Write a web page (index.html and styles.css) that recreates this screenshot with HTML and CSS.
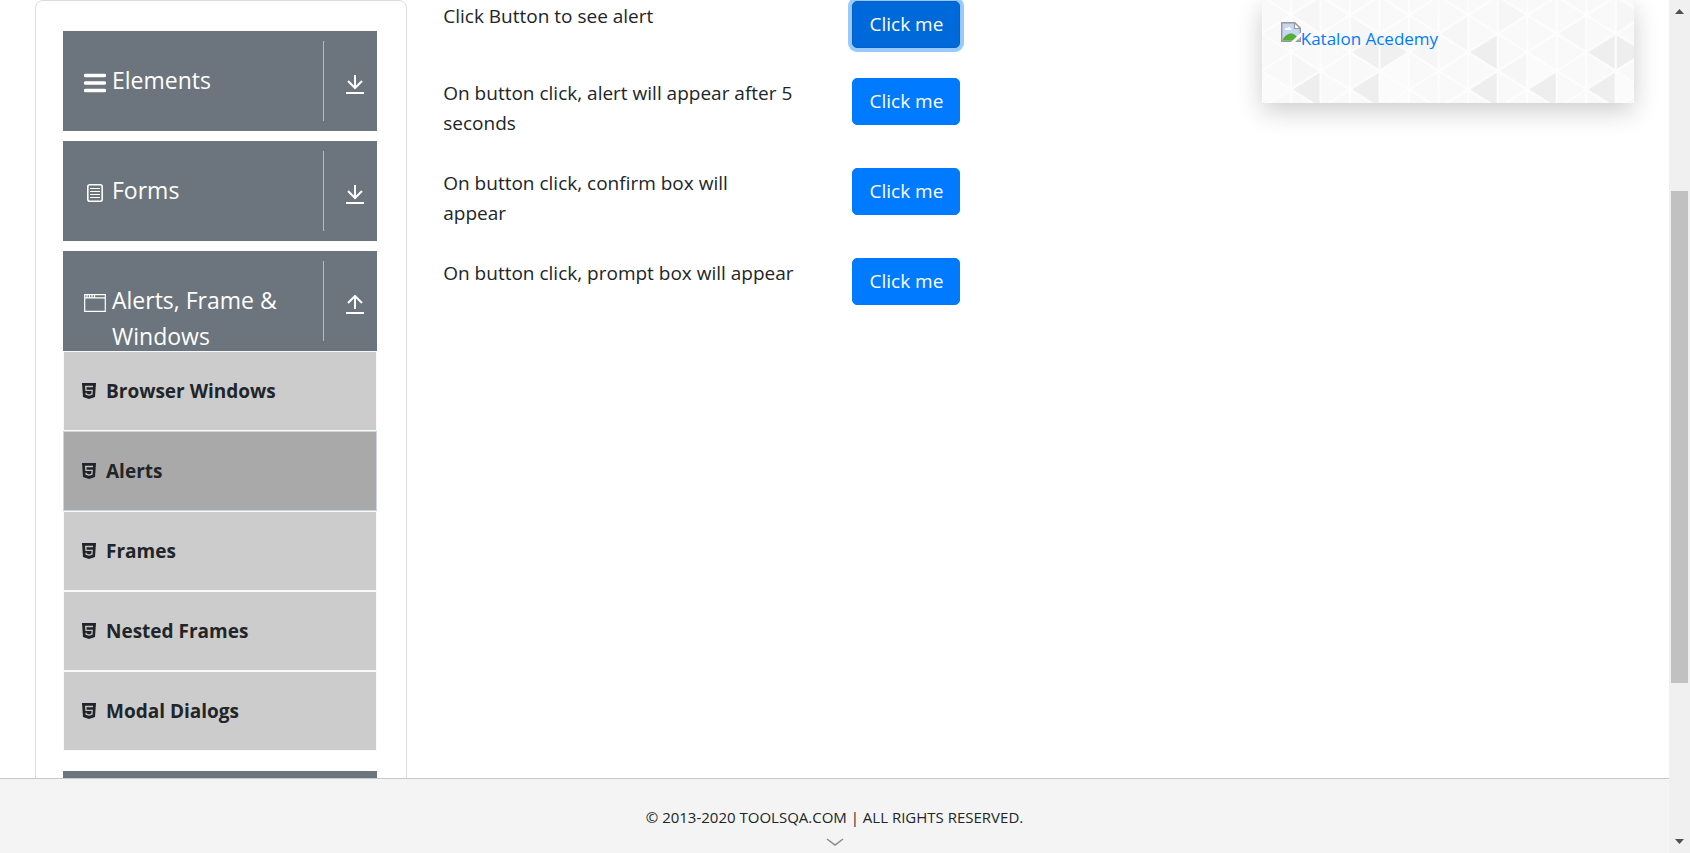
FILE: index.html
```html
<!DOCTYPE html>
<html lang="en">
<head>
<meta charset="utf-8">
<title>ToolsQA - Alerts</title>
<link rel="stylesheet" href="styles.css">
</head>
<body>
<svg class="defs" aria-hidden="true">
  <symbol id="down" viewBox="0 0 18 20"><path d="M9 0v13M2 6l7 7 7-7M0 18h18" fill="none" stroke="currentColor" stroke-width="2"/></symbol>
  <symbol id="up" viewBox="0 0 18 20"><path d="M9 14V1M2 8l7-7 7 7M0 18h18" fill="none" stroke="currentColor" stroke-width="2"/></symbol>
  <symbol id="html5" viewBox="0 0 14 16"><path d="M0 0h14l-1 14-6 2-6-2z" fill="currentColor"/><path d="M11 3.500H3.700l.3 3.800h6.200l-.3 3.900-2.900.9-2.800-.9-.1-1.400" fill="none" stroke="#c4c4c4" stroke-width="1.300"/></symbol>
</svg>
<div class="page">
  <main class="main">
    <nav class="sidebar" aria-label="Sections">
      <button class="group" type="button">
        <svg class="group-icon" viewBox="0 0 22 22"><path d="M1.500 3.500h19M1.500 11h19M1.500 18.500h19" stroke="currentColor" stroke-width="3.400" stroke-linecap="round"/></svg>
        <span class="group-label">Elements</span>
        <span class="toggle"><svg class="arrow"><use href="#down"/></svg></span>
      </button>
      <button class="group" type="button">
        <svg class="group-icon" viewBox="0 0 22 22"><rect x="3.800" y="2.800" width="14.400" height="16.400" rx="2" fill="none" stroke="currentColor" stroke-width="1.600"/><path d="M6 6.500h10M6 9.500h10M6 12.500h10M6 15.500h10" stroke="currentColor"/></svg>
        <span class="group-label">Forms</span>
        <span class="toggle"><svg class="arrow"><use href="#down"/></svg></span>
      </button>
      <button class="group" type="button">
        <svg class="group-icon" viewBox="0 0 22 22"><path d="M.7 2.700h20.600v16.600H.7zM.7 5.800h20.600M3 3v3M5.500 3v3M8 3v3M10.500 3v3" fill="none" stroke="currentColor" stroke-width="1.200"/></svg>
        <span class="group-label">Alerts, Frame &amp; Windows</span>
        <span class="toggle"><svg class="arrow"><use href="#up"/></svg></span>
      </button>
      <ul class="menu">
        <li><a class="item" href="#"><svg class="item-icon"><use href="#html5"/></svg>Browser Windows</a></li>
        <li><a class="item active" href="#"><svg class="item-icon"><use href="#html5"/></svg>Alerts</a></li>
        <li><a class="item" href="#"><svg class="item-icon"><use href="#html5"/></svg>Frames</a></li>
        <li><a class="item" href="#"><svg class="item-icon"><use href="#html5"/></svg>Nested Frames</a></li>
        <li><a class="item" href="#"><svg class="item-icon"><use href="#html5"/></svg>Modal Dialogs</a></li>
      </ul>
      <button class="group" type="button" aria-label="More"></button>
    </nav>
    <section class="content">
      <div class="row"><label class="text" for="b1">Click Button to see alert</label><button class="btn focused" id="b1" type="button">Click me</button></div>
      <div class="row"><label class="text" for="b2">On button click, alert will appear after 5 seconds</label><button class="btn" id="b2" type="button">Click me</button></div>
      <div class="row"><label class="text" for="b3">On button click, confirm box will<br>appear</label><button class="btn" id="b3" type="button">Click me</button></div>
      <div class="row"><label class="text" for="b4">On button click, prompt box will appear</label><button class="btn" id="b4" type="button">Click me</button></div>
    </section>
    <aside class="ad">
      <svg class="ad-pattern" viewBox="0 0 372 103" preserveAspectRatio="xMinYMin slice" aria-hidden="true">
        <defs><pattern id="tri" x="29" y="15" width="59" height="37.200" patternUnits="userSpaceOnUse"><path d="M0 0v38M29.500 0v38M59 0v38M0 0l59 37.200M0 37.200L59 0" stroke="#fdfdfd" stroke-width="2" fill="none"/></pattern></defs>
        <path fill="#f9f9f9" d="M0 0h372v103H0z"/>
        <path fill="#f6f6f6" d="M29 15l29.500-18V34zM88 15l29.500 18.500L88 52zM147 52l29.500-18.500v37zM176.500 33.500L206 15v37zM235.500-4L265 15l-29.500 18.500zM294.500 33.500L324 15v37zM29 52l29.500 18.500L29 89zM235.500 70.500L265 52v37zM353.500-4L383 15l-29.500 18.500z"/>
        <path fill="#fbfbfb" d="M117.500 70.500L147 52v74l-29.500-18zM265 52l29.500 18.500L265 89zM0 70.500L29 89 0 108zM353.500 70.500L383 89l-29.500 19z"/>
        <path fill="#eee" d="M29 89l29.500-18v37zM88 89l29.500-18v37zM206 52l29.500-18.500v37zM206 89l29.500-18v37zM265 89l29.500-18v37zM324 89l29.500-18v37zM324 52l29.500-18.500L383 52l-29.500 18.500z"/>
        <path fill="#f0f0f0" d="M88 52l29.500-18.500L147 52l-29.500 18.500z"/>
        <path fill="url(#tri)" d="M0 0h372v103H0z"/>
      </svg>
      <a class="ad-link" href="#"><svg class="broken" viewBox="0 0 20 20" aria-hidden="true"><path d="M.7.700h13l5.600 5.600v13H.7z" fill="#c6d6f5" stroke="#999" stroke-width="1.400"/><path d="M13.500.700v5.800h5.800z" fill="#fff" stroke="#999" stroke-width="1.200"/><path d="M4 7.500c0-2 2-2 2.500-1.500C7.500 4 9.500 5 9.500 6.500c1 0 1.500 1 .5 1.500H4z" fill="#fff"/><path d="M1.400 18.600C3 14 7 11.500 10 11.500s6 2.500 8 7.100z" fill="#56ad36"/><path d="M10 20L20 10.500v4L14 20z" fill="#fff"/></svg>Katalon Acedemy</a>
    </aside>
  </main>
  <footer class="footer">
    <span>© 2013-2020 TOOLSQA.COM | ALL RIGHTS RESERVED.</span>
    <svg class="chevron" viewBox="0 0 18 9" aria-hidden="true"><path d="M1 1l8 6 8-6" fill="none" stroke="#888" stroke-width="1.500"/></svg>
  </footer>
</div>
<div class="scrollbar" aria-hidden="true">
  <svg class="caret" viewBox="0 0 9 5"><path d="M0 5l4.500-5L9 5z"/></svg>
  <div class="track"><div class="thumb"></div></div>
  <svg class="caret" viewBox="0 0 9 5"><path d="M0 0l4.500 5L9 0z"/></svg>
</div>
</body>
</html>
```
FILE: styles.css
```css
* { box-sizing: border-box; }
body {
  margin: 0;
  display: flex;
  height: 100vh;
  overflow: hidden;
  font-family: "Open Sans", "Noto Sans", sans-serif;
  font-size: 19px;
  line-height: 30px;
  color: #212529;
  background: #fff;
}
button { font: inherit; }
.defs { position: absolute; width: 0; height: 0; }
.page { flex: 1; display: flex; flex-direction: column; min-width: 0; }
.main {
  flex: 1;
  min-height: 0;
  overflow: hidden;
  display: grid;
  grid-template-columns: 372fr 782fr 372fr;
  gap: 36px;
  padding: 0 35px;
  align-items: start;
}
.sidebar {
  border: 1px solid #dcdcdc;
  border-radius: 8px;
  padding: 30px 29px 30px 27px;
}
.group {
  display: flex;
  align-items: flex-start;
  width: 100%;
  height: 100px;
  margin: 0 0 10px;
  padding: 10px 0 0 21px;
  border: 0;
  background: #6c757d;
  color: #fff;
  font-size: 23px;
  line-height: 36px;
  text-align: left;
  overflow: hidden;
}
.group-icon { flex: none; width: 22px; height: 22px; margin: 31px 6px 0 0; }
.group-label { flex: 1; padding-top: 21px; }
.toggle {
  display: flex;
  justify-content: center;
  width: 54px;
  height: 80px;
  padding: 34px 0 0 9px;
  border-left: 1px solid #b5babe;
}
.arrow { width: 18px; height: 20px; }
.menu { list-style: none; margin: -10px 0 20px; padding: 0; }
.item {
  display: flex;
  align-items: center;
  gap: 10px;
  height: 80px;
  padding: 0 18px;
  border: 1px solid #f8f9fa;
  background: #ccc;
  color: #212529;
  font-weight: 700;
  text-decoration: none;
}
.item.active { background: #a9a9a9; border-color: #ced4da; }
.item-icon { width: 14px; height: 16px; }
.content { display: flex; flex-direction: column; gap: 30px; padding-top: 1px; }
.row {
  display: grid;
  grid-template-columns: 1fr 1fr;
  gap: 36px;
  align-items: start;
}
.btn {
  justify-self: start;
  padding: 8px 16px;
  border: 1px solid #007bff;
  border-radius: 5px;
  background: #007bff;
  color: #fff;
  line-height: 29px;
}
.btn.focused { background: #0069d9; border-color: #0062cc; box-shadow: 0 0 0 4px #99c9ff; }
.ad {
  position: relative;
  height: 103px;
  padding: 22px 19px;
  box-shadow: 0 8px 24px rgba(0, 0, 0, 0.2);
}
.ad-pattern { position: absolute; inset: 0; width: 100%; height: 100%; }
.ad-link {
  position: relative;
  display: flex;
  color: #007bff;
  font-size: 17px;
  line-height: 34px;
  text-decoration: none;
}
.broken { width: 20px; height: 20px; }
.footer {
  display: flex;
  flex-direction: column;
  align-items: center;
  height: 75px;
  padding-top: 23px;
  border-top: 1px solid #c8c8c8;
  background: #f4f4f4;
  font-size: 15px;
}
.chevron { flex: none; width: 18px; height: 9px; margin-top: 6px; }
.scrollbar {
  display: flex;
  flex-direction: column;
  align-items: center;
  width: 21px;
  padding: 9px 0;
  background: #f0f0f0;
}
.caret { width: 9px; height: 5px; fill: #505050; }
.track { flex: 1; width: 17px; padding-top: 177px; }
.thumb { height: 76%; background: #c1c1c1; }
```
